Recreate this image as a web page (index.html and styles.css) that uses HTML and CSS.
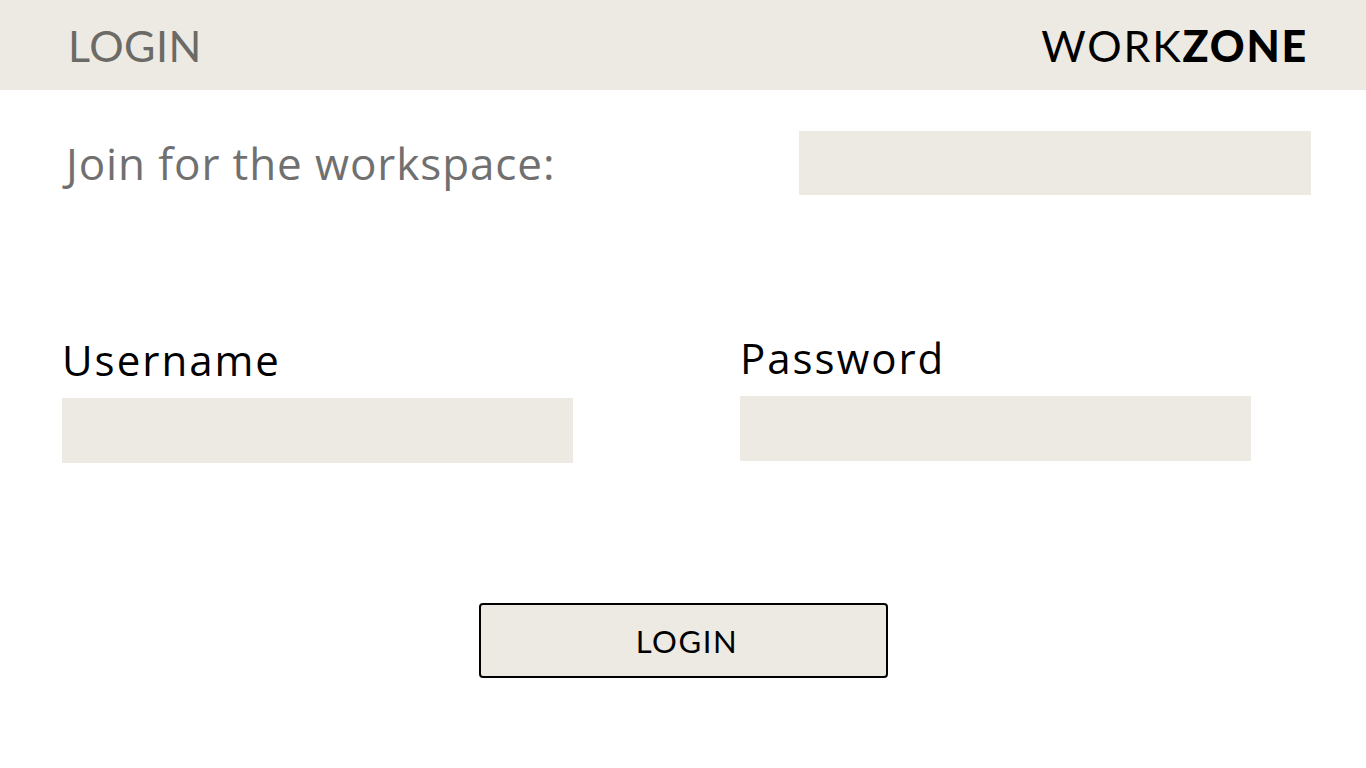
FILE: index.html
```html
<!DOCTYPE html>
<html lang="en">
<head>
<meta charset="utf-8">
<title>Login - WorkZone</title>
<link rel="stylesheet" href="styles.css">
</head>
<body>
<header class="topbar">
  <h1 class="page-title">LOGIN</h1>
  <div class="brand"><span class="brand-light">WORK</span><span class="brand-bold">ZONE</span></div>
</header>
<main class="content">
  <div class="workspace-row">
    <label class="workspace-label" for="ws">Join for the workspace:</label>
    <input class="field field-workspace" id="ws" type="text">
  </div>
  <div class="fields-row">
    <div class="field-group">
      <label class="field-label" for="user">Username</label>
      <input class="field" id="user" type="text">
    </div>
    <div class="field-group field-group-pass">
      <label class="field-label" for="pass">Password</label>
      <input class="field" id="pass" type="password">
    </div>
  </div>
  <div class="actions">
    <button class="login-btn" type="button">LOGIN</button>
  </div>
</main>
</body>
</html>
```
FILE: styles.css
```css
* { box-sizing: border-box; }
body {
  margin: 0;
  background: #ffffff;
  font-family: "Lato", "Open Sans", sans-serif;
  color: #000;
}
.topbar {
  height: 90px;
  background: #edeae3;
  display: flex;
  align-items: center;
  justify-content: space-between;
  padding: 0 60px 0 68px;
}
.page-title {
  margin: 0;
  font-size: 43px;
  font-weight: 400;
  color: #6b6a66;
  line-height: 1;
  letter-spacing: 0.5px;
}
.brand {
  font-size: 43px;
  line-height: 1;
  color: #000;
  letter-spacing: 1.8px;
  margin-right: -2px;
}
.brand-light { font-weight: 400; }
.brand-bold { font-weight: 900; }
.content { display: flex; flex-direction: column; }
.workspace-row {
  margin-top: 41px;
  display: flex;
  align-items: center;
  justify-content: space-between;
  padding: 0 55px 0 66px;
}
.workspace-label {
  font-family: "Open Sans", "Lato", sans-serif;
  font-size: 44px;
  letter-spacing: 0.9px;
  color: #707070;
}
.field {
  display: block;
  width: 511px;
  height: 65px;
  border: none;
  background: #edeae3;
  outline: none;
}
.field-workspace { width: 512px; height: 64px; }
.fields-row {
  margin-top: 140px;
  display: flex;
  padding-left: 62px;
  gap: 167px;
}
.field-group { display: flex; flex-direction: column; }
.field-group-pass { margin-top: -2px; }
.field-label {
  font-family: "Open Sans", "Lato", sans-serif;
  font-size: 42px;
  letter-spacing: 2px;
  line-height: 50px;
  margin-bottom: 13px;
}
.actions {
  margin-top: 140px;
  display: flex;
  justify-content: center;
}
.login-btn {
  width: 409px;
  height: 75px;
  background: #edeae3;
  border: 2px solid #000;
  border-radius: 4px;
  font-family: "Lato", sans-serif;
  font-size: 31px;
  letter-spacing: 1.6px;
  color: #000;
  padding: 0 0 0 8px;
}
```
